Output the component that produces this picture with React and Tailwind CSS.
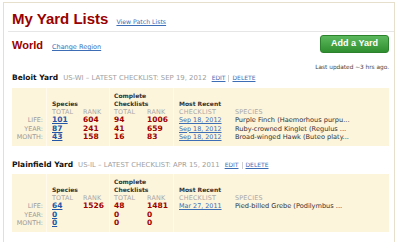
import React from "react";

// data

const yards = [
  {
    name: "Beloit Yard",
    meta: "US-WI – LATEST CHECKLIST: SEP 19, 2012",
    rows: [
      { label: "LIFE:", total: "101", rank: "604", cTotal: "94", cRank: "1006", date: "Sep 18, 2012", species: "Purple Finch (Haemorhous purpu..." },
      { label: "YEAR:", total: "87", rank: "241", cTotal: "41", cRank: "659", date: "Sep 18, 2012", species: "Ruby-crowned Kinglet (Regulus ..." },
      { label: "MONTH:", total: "43", rank: "158", cTotal: "16", cRank: "83", date: "Sep 18, 2012", species: "Broad-winged Hawk (Buteo platy..." },
    ],
  },
  {
    name: "Plainfield Yard",
    meta: "US-IL – LATEST CHECKLIST: APR 15, 2011",
    rows: [
      { label: "LIFE:", total: "64", rank: "1526", cTotal: "48", cRank: "1481", date: "Mar 27, 2011", species: "Pied-billed Grebe (Podilymbus ..." },
      { label: "YEAR:", total: "0", rank: "", cTotal: "0", cRank: "0", date: "", species: "" },
      { label: "MONTH:", total: "0", rank: "", cTotal: "0", cRank: "0", date: "", species: "" },
    ],
  },
];

const verdana = "font-['DejaVu_Sans',Verdana,sans-serif]";
const arial = "font-['Liberation_Sans',Arial,sans-serif]";

function SubHead({ children }) {
  return (
    <div className="h-[8px] leading-[8px] text-[6.4px] text-[#a8a8a8] tracking-[0.2px]">
      {children}
    </div>
  );
}

function Cell({ children, className }) {
  return (
    <div className={"h-[8.5px] leading-[8.5px] whitespace-nowrap " + (className || "")}>
      {children}
    </div>
  );
}

function YardPanel({ yard }) {
  return (
    <div className={"flex bg-[#fdf4dc] h-[58px] " + verdana}>
      {/* row labels */}
      <div className="w-[34px] pr-[3px] pt-[4px] text-right text-[6.4px] text-[#9a9a9a]">
        <div className="h-[24px]" />
        {yard.rows.map((r) => (
          <Cell key={r.label}>{r.label}</Cell>
        ))}
      </div>

      {/* species */}
      <div className="w-[63px] border-l border-[#fffaec] pl-[5px] pt-[4px]">
        <div className="h-[16px] flex items-end">
          <div className="leading-[8px] text-[6px] font-bold text-[#333]">Species</div>
        </div>
        <div className="grid grid-cols-[31px_26px]">
          <SubHead>TOTAL</SubHead>
          <SubHead>RANK</SubHead>
          {yard.rows.map((r) => (
            <React.Fragment key={r.label}>
              <Cell className="text-[7.5px] font-bold text-[#2456a8] underline">{r.total}</Cell>
              <Cell className="text-[7.5px] font-bold text-[#9c0000]">{r.rank}</Cell>
            </React.Fragment>
          ))}
        </div>
      </div>

      {/* complete checklists */}
      <div className="w-[64px] border-l border-[#fffaec] pl-[4px] pt-[4px]">
        <div className="h-[16px] leading-[8px] text-[6px] font-bold text-[#333]">
          Complete
          <br />
          Checklists
        </div>
        <div className="grid grid-cols-[33px_26px]">
          <SubHead>TOTAL</SubHead>
          <SubHead>RANK</SubHead>
          {yard.rows.map((r) => (
            <React.Fragment key={r.label}>
              <Cell className="text-[7.5px] font-bold text-[#9c0000]">{r.cTotal}</Cell>
              <Cell className="text-[7.5px] font-bold text-[#9c0000]">{r.cRank}</Cell>
            </React.Fragment>
          ))}
        </div>
      </div>

      {/* most recent */}
      <div className="flex-1 border-l border-[#fffaec] pl-[5px] pt-[4px]">
        <div className="h-[16px] flex items-end">
          <div className="leading-[8px] text-[6px] font-bold text-[#333]">Most Recent</div>
        </div>
        <div className="grid grid-cols-[56px_1fr]">
          <SubHead>CHECKLIST</SubHead>
          <SubHead>SPECIES</SubHead>
          {yard.rows.map((r) => (
            <React.Fragment key={r.label}>
              <Cell className="text-[6.4px] text-[#3d6db5] underline">{r.date}</Cell>
              <Cell className="text-[6.6px] text-[#333]">{r.species}</Cell>
            </React.Fragment>
          ))}
        </div>
      </div>
    </div>
  );
}

function YardHeading({ yard }) {
  return (
    <div className={"h-[10px] flex items-baseline whitespace-nowrap " + verdana}>
      <span className="text-[7.5px] leading-[10px] font-bold text-[#111]">{yard.name}</span>
      <span className="ml-[5px] text-[6.9px] text-[#a0a0a0]">{yard.meta}</span>
      <a className="ml-[5px] text-[6px] text-[#3d6db5] underline">EDIT</a>
      <span className="mx-[3px] h-[7px] self-center border-l border-[#cfcfcf]" />
      <a className="text-[6px] text-[#3d6db5] underline">DELETE</a>
    </div>
  );
}

export default function App() {
  return (
    <div className="h-[242px] overflow-hidden bg-white">
      <div className="ml-[3px] mt-[2px] w-[392px] h-[300px] border-x border-t border-[#e6dfcc]">
        {/* title */}
        <div className="ml-[4px] pl-[4px] pt-[7px] pb-[3px] flex items-baseline border-b border-[#e6e6e6]">
          <h1 className={"text-[15px] leading-[18px] font-bold text-[#990000] " + arial}>
            My Yard Lists
          </h1>
          <a className={"ml-[8px] text-[6.2px] text-[#3d6db5] underline " + verdana}>
            View Patch Lists
          </a>
        </div>

        <div className="pl-[8px] pr-[5px]">
          {/* region + add button */}
          <div className="mt-[3px] flex justify-between">
            <div className="pt-[3px] flex items-baseline">
              <h2 className={"text-[11px] leading-[14px] font-bold text-[#990000] " + arial}>
                World
              </h2>
              <a className={"ml-[9px] text-[6.5px] text-[#3d6db5] underline " + verdana}>
                Change Region
              </a>
            </div>
            <button
              className={
                "h-[18px] w-[69px] rounded-[3px] border border-[#2c812c] bg-linear-to-b from-[#5cb85c] to-[#2f8f2f] text-[9px] font-bold text-white " +
                arial
              }
            >
              Add a Yard
            </button>
          </div>

          <div className={"mt-[10px] h-[8px] leading-[8px] text-right text-[5.8px] text-[#444] " + verdana}>
            Last updated ~3 hrs ago.
          </div>

          <div className="mt-[2px]">
            <YardHeading yard={yards[0]} />
            <div className="mt-[5px]">
              <YardPanel yard={yards[0]} />
            </div>
          </div>

          <div className="mt-[14px]">
            <YardHeading yard={yards[1]} />
            <div className="mt-[4px]">
              <YardPanel yard={yards[1]} />
            </div>
          </div>
        </div>
      </div>
    </div>
  );
}
